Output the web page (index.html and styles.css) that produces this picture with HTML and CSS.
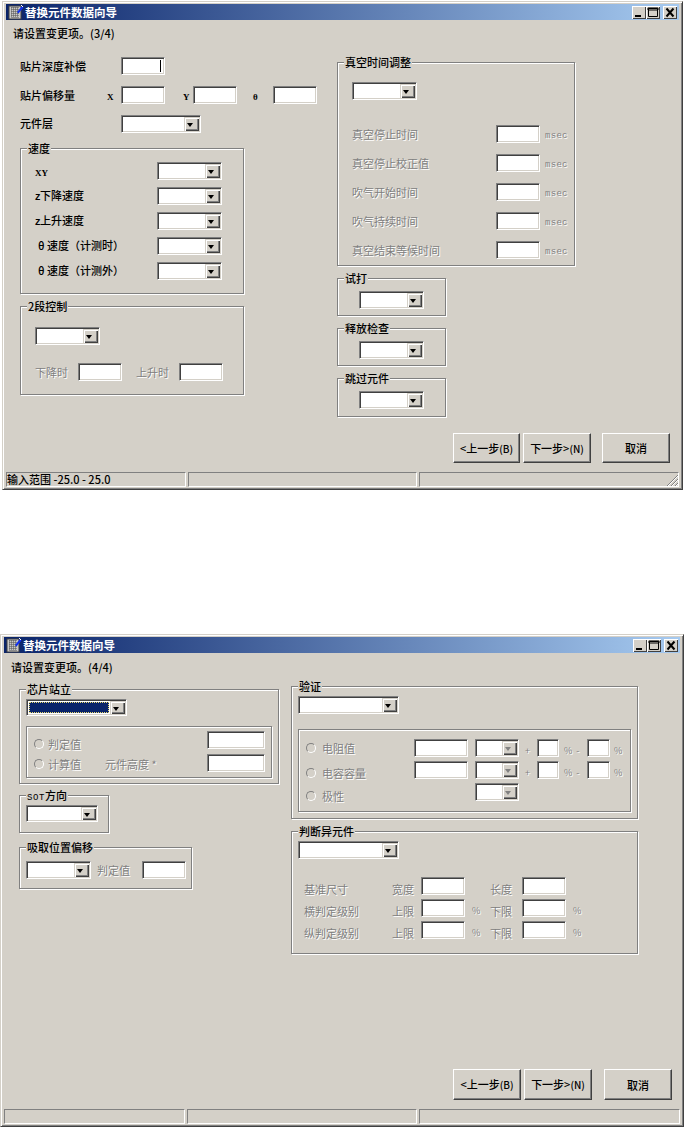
FILE: index.html
```html
<!DOCTYPE html>
<html lang="zh-CN">
<head>
<meta charset="utf-8">
<title>替换元件数据向导</title>
<link rel="stylesheet" href="styles.css">
</head>
<body>

<section class="window window-a">
  <header class="titlebar">
    <svg class="app-icon" viewBox="0 0 16 16" width="16" height="16"><rect x="1" y="2" width="12" height="13" fill="#c8c8c8" stroke="#404040"/><path d="M3 4h8M3 6h8M3 8h8M3 10h8M3 12h8M4 3v11M6 3v11M8 3v11M10 3v11" stroke="#505050" stroke-dasharray="1 1"/><path d="M9 8l5-6 1.500 1.500-5 6z" fill="#1030f0"/><path d="M13 1l2 2" stroke="#fff"/></svg>
    <span class="title">替换元件数据向导</span>
    <div class="caption-buttons">
      <span class="cap"><svg viewBox="0 0 14 13" width="14" height="13"><path d="M3 9h6v2H3z"/></svg></span>
      <span class="cap"><svg viewBox="0 0 14 13" width="14" height="13"><path d="M2.500 2.500h9v8h-9zM2 2h10v2H2z" fill="none" stroke="#000"/></svg></span>
      <span class="cap cap-close"><svg viewBox="0 0 14 13" width="14" height="13"><path d="M3.500 2.500l7 8M10.500 2.500l-7 8" stroke="#000" stroke-width="2" fill="none"/></svg></span>
    </div>
  </header>
  <p class="prompt">请设置变更项。(3/4)</p>
  <div class="columns columns-a">
    <div class="col col-a-left">
      <div class="row"><span class="lbl w101">贴片深度补偿</span><span class="input w44 has-caret"><i class="caret"></i></span></div>
      <div class="row mt11"><span class="lbl w87">贴片偏移量</span><span class="lbl latin w14">X</span><span class="input w44"></span><span class="lbl latin ml18 w10">Y</span><span class="input w44"></span><span class="lbl latin ml16 w20">θ</span><span class="input w44"></span></div>
      <div class="row mt11"><span class="lbl lift w101">元件层</span><span class="combo w80"><span class="arrow"></span></span></div>

      <div class="group speed">
        <div class="legend">速度</div>
        <div class="row mt6"><span class="lbl latin w122">XY</span><span class="combo w65"><span class="arrow"></span></span></div>
        <div class="row mt7"><span class="lbl lift w122"><span class="tiny">Z</span>下降速度</span><span class="combo w65"><span class="arrow"></span></span></div>
        <div class="row mt7"><span class="lbl lift w122"><span class="tiny">Z</span>上升速度</span><span class="combo w65"><span class="arrow"></span></span></div>
        <div class="row mt7"><span class="lbl lift w122 indent">θ 速度（计测时）</span><span class="combo w65"><span class="arrow"></span></span></div>
        <div class="row mt7"><span class="lbl lift w122 indent">θ 速度（计测外）</span><span class="combo w65"><span class="arrow"></span></span></div>
      </div>

      <div class="group stage">
        <div class="legend">2段控制</div>
        <div class="row mt13"><span class="combo w65"><span class="arrow"></span></span></div>
        <div class="row mt18"><span class="lbl off w43">下降时</span><span class="input w44"></span><span class="lbl off ml14 w43">上升时</span><span class="input w44"></span></div>
      </div>
    </div>

    <div class="col col-a-right">
      <div class="group vacuum">
        <div class="legend">真空时间调整</div>
        <div class="row mt12"><span class="combo w65"><span class="arrow"></span></span></div>
        <div class="row mt25"><span class="lbl off w144">真空停止时间</span><span class="input w44"></span><span class="unit">msec</span></div>
        <div class="row mt11"><span class="lbl off w144">真空停止校正值</span><span class="input w44"></span><span class="unit">msec</span></div>
        <div class="row mt11"><span class="lbl off w144">吹气开始时间</span><span class="input w44"></span><span class="unit">msec</span></div>
        <div class="row mt11"><span class="lbl off w144">吹气持续时间</span><span class="input w44"></span><span class="unit">msec</span></div>
        <div class="row mt11"><span class="lbl off w144">真空结束等候时间</span><span class="input w44"></span><span class="unit">msec</span></div>
      </div>
      <div class="group mini"><div class="legend">试打</div><div class="row mt5"><span class="combo w65"><span class="arrow"></span></span></div></div>
      <div class="group mini"><div class="legend">释放检查</div><div class="row mt5"><span class="combo w65"><span class="arrow"></span></span></div></div>
      <div class="group mini mini-tall"><div class="legend">跳过元件</div><div class="row mt5"><span class="combo w65"><span class="arrow"></span></span></div></div>
      <div class="actions actions-a">
        <button class="btn btn-narrow">&lt;上一步<span class="key">(B)</span></button>
        <button class="btn">下一步&gt;<span class="key">(N)</span></button>
        <button class="btn cancel">取消</button>
      </div>
    </div>
  </div>
  <footer class="statusbar">
    <span class="pane pane-1">输入范围 -25.0 - 25.0</span>
    <span class="pane pane-2"></span>
    <span class="pane pane-3"><svg class="grip" viewBox="0 0 12 12" width="12" height="12"><path d="M12 1L1 12M12 5L5 12M12 9L9 12" stroke="#808080" fill="none"/><path d="M12 2L2 12M12 6L6 12M12 10L10 12" stroke="#fff" fill="none"/></svg></span>
  </footer>
</section>

<section class="window window-b">
  <header class="titlebar">
    <svg class="app-icon" viewBox="0 0 16 16" width="16" height="16"><rect x="1" y="2" width="12" height="13" fill="#c8c8c8" stroke="#404040"/><path d="M3 4h8M3 6h8M3 8h8M3 10h8M3 12h8M4 3v11M6 3v11M8 3v11M10 3v11" stroke="#505050" stroke-dasharray="1 1"/><path d="M9 8l5-6 1.500 1.500-5 6z" fill="#1030f0"/><path d="M13 1l2 2" stroke="#fff"/></svg>
    <span class="title">替换元件数据向导</span>
    <div class="caption-buttons">
      <span class="cap"><svg viewBox="0 0 14 13" width="14" height="13"><path d="M3 9h6v2H3z"/></svg></span>
      <span class="cap"><svg viewBox="0 0 14 13" width="14" height="13"><path d="M2.500 2.500h9v8h-9zM2 2h10v2H2z" fill="none" stroke="#000"/></svg></span>
      <span class="cap cap-close"><svg viewBox="0 0 14 13" width="14" height="13"><path d="M3.500 2.500l7 8M10.500 2.500l-7 8" stroke="#000" stroke-width="2" fill="none"/></svg></span>
    </div>
  </header>
  <p class="prompt prompt-b">请设置变更项。(4/4)</p>
  <div class="columns columns-b">
    <div class="col col-b-left">
      <div class="group chip">
        <div class="legend">芯片站立</div>
        <div class="row mt2"><span class="combo w101 short selected"><i class="sel"></i><span class="arrow"></span></span></div>
        <div class="inner chip-inner">
          <div class="row"><span class="radio drop8"></span><span class="lbl off drop8">判定值</span><span class="input w58 push"></span></div>
          <div class="row mt5"><span class="radio drop2"></span><span class="lbl off drop2 w57">计算值</span><span class="lbl off drop2">元件高度 *</span><span class="input w58 push"></span></div>
        </div>
      </div>
      <div class="group sot">
        <div class="legend"><span class="tiny-word">SOT</span>方向</div>
        <div class="row mt2"><span class="combo w72 short"><span class="arrow"></span></span></div>
      </div>
      <div class="group pick">
        <div class="legend">吸取位置偏移</div>
        <div class="row mt6"><span class="combo w65"><span class="arrow"></span></span><span class="lbl off ml6 w45">判定值</span><span class="input w44"></span></div>
      </div>
    </div>

    <div class="col col-b-right">
      <div class="group verify">
        <div class="legend">验证</div>
        <div class="row mt2"><span class="combo w101"><span class="arrow"></span></span></div>
        <div class="inner verify-inner">
          <span class="radio"></span><span class="lbl off">电阻值</span><span class="input"></span><span class="combo combo-off"><span class="arrow"></span></span><span class="sign">+</span><span class="input"></span><span class="sign sign-mid">% -</span><span class="input"></span><span class="sign sign-end">%</span>
          <span class="radio drop5"></span><span class="lbl off drop5">电容容量</span><span class="input"></span><span class="combo combo-off"><span class="arrow"></span></span><span class="sign">+</span><span class="input"></span><span class="sign sign-mid">% -</span><span class="input"></span><span class="sign sign-end">%</span>
          <span class="radio drop7"></span><span class="lbl off drop7 span-2">极性</span><span class="combo combo-off"><span class="arrow"></span></span>
        </div>
      </div>
      <div class="group judge">
        <div class="legend">判断异元件</div>
        <div class="row mt2"><span class="combo w101"><span class="arrow"></span></span></div>
        <div class="judge-grid">
          <span class="lbl off">基准尺寸</span><span class="lbl off">宽度</span><span class="input"></span><span></span><span class="lbl off">长度</span><span class="input"></span><span></span>
          <span class="lbl off">横判定级别</span><span class="lbl off">上限</span><span class="input"></span><span class="sign sign-pct">%</span><span class="lbl off">下限</span><span class="input"></span><span class="sign sign-pct">%</span>
          <span class="lbl off">纵判定级别</span><span class="lbl off">上限</span><span class="input"></span><span class="sign sign-pct">%</span><span class="lbl off">下限</span><span class="input"></span><span class="sign sign-pct">%</span>
        </div>
      </div>
      <div class="actions actions-b">
        <button class="btn tall">&lt;上一步<span class="key">(B)</span></button>
        <button class="btn tall">下一步&gt;<span class="key">(N)</span></button>
        <button class="btn tall cancel-b">取消</button>
      </div>
    </div>
  </div>
  <footer class="statusbar">
    <span class="pane pane-b1"></span>
    <span class="pane pane-b2"></span>
    <span class="pane pane-3"></span>
  </footer>
</section>

</body>
</html>
```

FILE: styles.css
```css
* { box-sizing: border-box; }
html, body { margin: 0; padding: 0; }
body {
  background: #fff;
  font-family: "Noto Sans CJK SC", "Liberation Sans", sans-serif;
  font-size: 11px;
  font-weight: 500;
  line-height: 14px;
  color: #000;
  overflow: hidden;
}

/* window frame */
.window {
  display: flex;
  flex-direction: column;
  background: #d4d0c8;
  border: 1px solid;
  border-color: #d4d0c8 #404040 #404040 #d4d0c8;
  box-shadow: inset 1px 1px 0 #fff, inset -1px -1px 0 #808080;
  padding: 2px 3px;
}
.window-a { width: 681px; height: 489px; margin: 1px 0 0 2px; }
.window-b { width: 684px; height: 493px; margin-top: 144px; }

.titlebar {
  display: flex;
  align-items: center;
  flex: none;
  height: 16px;
  padding: 0 2px;
  background: linear-gradient(90deg, #0a246a, #a6caf0);
  color: #fff;
}
.app-icon { flex: none; margin-right: 1px; }
.title { font-size: 11.500px; font-weight: 700; }
.caption-buttons { display: flex; margin-left: auto; }
.cap {
  display: block;
  width: 14px;
  height: 13px;
  background: #d4d0c8;
  box-shadow: inset 1px 1px 0 #fff, inset -1px -1px 0 #404040;
}
.cap svg { display: block; }
.cap-close { margin-left: 3px; }

.prompt { margin: 6px 0 0; padding-left: 7px; height: 14px; flex: none; }
.prompt-b { margin-top: 7px; }

/* layout columns */
.columns { display: flex; flex: none; }
.columns-a { margin-top: 17px; padding-left: 14px; }
.columns-b { margin-top: 12px; padding-left: 15px; }
.col-a-left { width: 317px; }
.col-a-right { margin-top: 5px; }
.col-b-left { width: 272px; padding-top: 3px; }

.row { display: flex; align-items: center; height: 18px; }
.mt2 { margin-top: 2px; } .mt5 { margin-top: 5px; } .mt6 { margin-top: 6px; }
.mt7 { margin-top: 7px; } .mt11 { margin-top: 11px; } .mt12 { margin-top: 12px; }
.mt13 { margin-top: 13px; } .mt18 { margin-top: 18px; } .mt25 { margin-top: 25px; }
.ml6 { margin-left: 6px; } .ml14 { margin-left: 14px; } .ml16 { margin-left: 16px; } .ml18 { margin-left: 18px; }

/* labels */
.lbl { display: block; flex: none; white-space: nowrap; }
.off { color: #808080; font-weight: 400; text-shadow: 1px 1px 0 #fff; }
.latin { font-family: "Liberation Serif", serif; font-size: 9px; font-weight: 700; padding-top: 3px; }
.tiny { font-family: "Liberation Mono", monospace; font-size: 9px; font-weight: 700; display: inline-block; width: 5px; line-height: 10px; }
.tiny-word { font-family: "Liberation Mono", monospace; font-size: 9px; letter-spacing: .6px; }
.lift { margin-bottom: 2px; }
.drop2 { margin-top: 2px; }
.drop5 { margin-top: 5px; }
.drop7 { margin-top: 7px; }
.drop8 { margin-top: 8px; }
.indent { padding-left: 3px; }
.w10 { width: 10px; } .w14 { width: 14px; } .w20 { width: 20px; }
.w43 { width: 43px; } .w45 { width: 45px; } .w57 { width: 57px; }
.w87 { width: 87px; } .w122 { width: 122px; } .w144 { width: 144px; }
.w101 { width: 101px; }

/* sunken fields */
.input, .combo {
  display: flex;
  flex: none;
  height: 18px;
  background: #fff;
  border: 1px solid;
  border-color: #808080 #fff #fff #808080;
  box-shadow: inset 1px 1px 0 #404040, inset -1px -1px 0 #d4d0c8;
}
.w44 { width: 44px; } .w58 { width: 58px; } .w65 { width: 65px; }
.w72 { width: 72px; } .w80 { width: 80px; }
.push { margin-left: auto; }
.short { height: 17px; align-self: flex-start; }
.has-caret { justify-content: flex-end; padding: 2px 3px; }
.caret { display: block; width: 1px; background: #000; }

.combo { justify-content: flex-end; padding: 1px; align-items: stretch; }
.arrow {
  position: relative;
  display: block;
  width: 15px;
  background: #d4d0c8;
  box-shadow: inset 1px 1px 0 #d4d0c8, inset 2px 2px 0 #fff, inset -1px -1px 0 #404040, inset -2px -2px 0 #808080;
}
.arrow::after {
  content: "";
  position: absolute;
  left: 3px;
  top: 6px;
  border: 3.500px solid transparent;
  border-top: 4px solid #000;
  border-bottom: 0;
}
.combo-off .arrow::after { border-top-color: #808080; }
.selected { justify-content: space-between; }
.sel { display: block; flex: 1; background: #0a246a; outline: 1px dotted #e8d870; outline-offset: -1px; margin: 1px; }

/* group boxes */
.group {
  border: 1px solid #808080;
  box-shadow: 1px 1px 0 #fff, inset 1px 1px 0 #fff;
  padding-left: 14px;
}
.legend {
  width: fit-content;
  height: 14px;
  margin: -7px 0 0 -8px;
  padding: 0 1px;
  line-height: 12px;
  background: #d4d0c8;
  white-space: nowrap;
}
.speed { width: 224px; height: 146px; margin-top: 15px; }
.stage { width: 224px; height: 89px; margin-top: 12px; }
.vacuum { width: 238px; height: 204px; }
.mini { width: 109px; height: 38px; margin-top: 12px; padding-left: 21px; }
.mini .legend { margin-left: -15px; }
.mini-tall { height: 39px; }

.unit {
  margin: 3px 0 0 5px;
  font-family: "Liberation Mono", monospace;
  font-size: 9px;
  font-weight: 400;
  letter-spacing: .3px;
  color: #808080;
  text-shadow: 1px 1px 0 #fff;
}

.inner {
  border: 1px solid #808080;
  box-shadow: 1px 1px 0 #fff, inset 1px 1px 0 #fff;
}
.radio {
  display: block;
  flex: none;
  width: 10px;
  height: 10px;
  margin-right: 4px;
  border-radius: 50%;
  border: 1px solid;
  border-color: #808080 #fff #fff #808080;
}

/* page 2 groups */
.chip { width: 260px; height: 95px; padding-left: 6px; }
.chip .legend, .sot .legend, .pick .legend, .verify .legend, .judge .legend { margin-left: 0; }
.chip-inner { width: 246px; height: 52px; margin-top: 9px; padding: 4px 6px 0 7px; }
.sot { width: 90px; height: 38px; margin-top: 11px; padding-left: 6px; }
.pick { width: 173px; height: 42px; margin-top: 14px; padding-left: 6px; }
.verify { width: 347px; height: 133px; padding-left: 6px; }
.verify-inner {
  display: grid;
  grid-template-columns: 16px 92px 54px 51px 18px 22px 28px 23px 1fr;
  grid-auto-rows: 18px;
  row-gap: 4px;
  align-items: center;
  width: 333px;
  height: 83px;
  margin-top: 15px;
  padding: 9px 0 0 7px;
}
.verify-inner > .input, .verify-inner > .combo { align-self: stretch; }
.verify-inner > .combo { width: 44px; justify-self: end; }
.span-2 { grid-column: span 2; }
.sign { color: #808080; font-weight: 400; text-shadow: 1px 1px 0 #fff; font-size: 9px; margin-top: 6px; padding-left: 6px; white-space: nowrap; }
.sign-mid { padding-left: 5px; letter-spacing: 1px; }
.sign-end { padding-left: 4px; }
.sign-pct { padding-left: 7px; }
.judge { width: 347px; height: 123px; margin-top: 12px; padding-left: 6px; }
.judge-grid {
  display: grid;
  grid-template-columns: 88px 29px 44px 25px 32px 44px 1fr;
  grid-auto-rows: 18px;
  row-gap: 4px;
  align-items: center;
  margin: 18px 0 0 6px;
}
.judge-grid > .input { align-self: stretch; }
.judge-grid > .lbl { margin-top: 6px; }

/* buttons */
.actions { display: flex; gap: 3px; }
.actions-a { margin: 16px 0 0 116px; }
.actions-b { margin: 115px 0 0 162px; }
.btn {
  width: 68px;
  height: 30px;
  padding: 0;
  font: inherit;
  color: #000;
  background: #d4d0c8;
  border: 1px solid;
  border-color: #fff #404040 #404040 #fff;
  box-shadow: inset -1px -1px 0 #808080;
}
.btn-narrow { width: 67px; }
.key { font-size: 10px; }
.tall { height: 31px; }
.cancel { margin-left: 8px; }
.cancel-b { margin-left: 9px; }

/* status bar */
.statusbar { display: flex; gap: 2px; flex: none; height: 15px; margin-top: auto; }
.pane {
  display: flex;
  align-items: center;
  justify-content: flex-start;
  height: 15px;
  padding: 0 0 2px;
  overflow: hidden;
  white-space: nowrap;
  border: 1px solid;
  border-color: #808080 #fff #fff #808080;
}
.pane-1 { width: 180px; }
.pane-2 { width: 229px; }
.pane-3 { flex: 1; justify-content: flex-end; padding: 0; }
.pane-b1 { width: 181px; }
.pane-b2 { width: 230px; }
.grip { flex: none; }
```
